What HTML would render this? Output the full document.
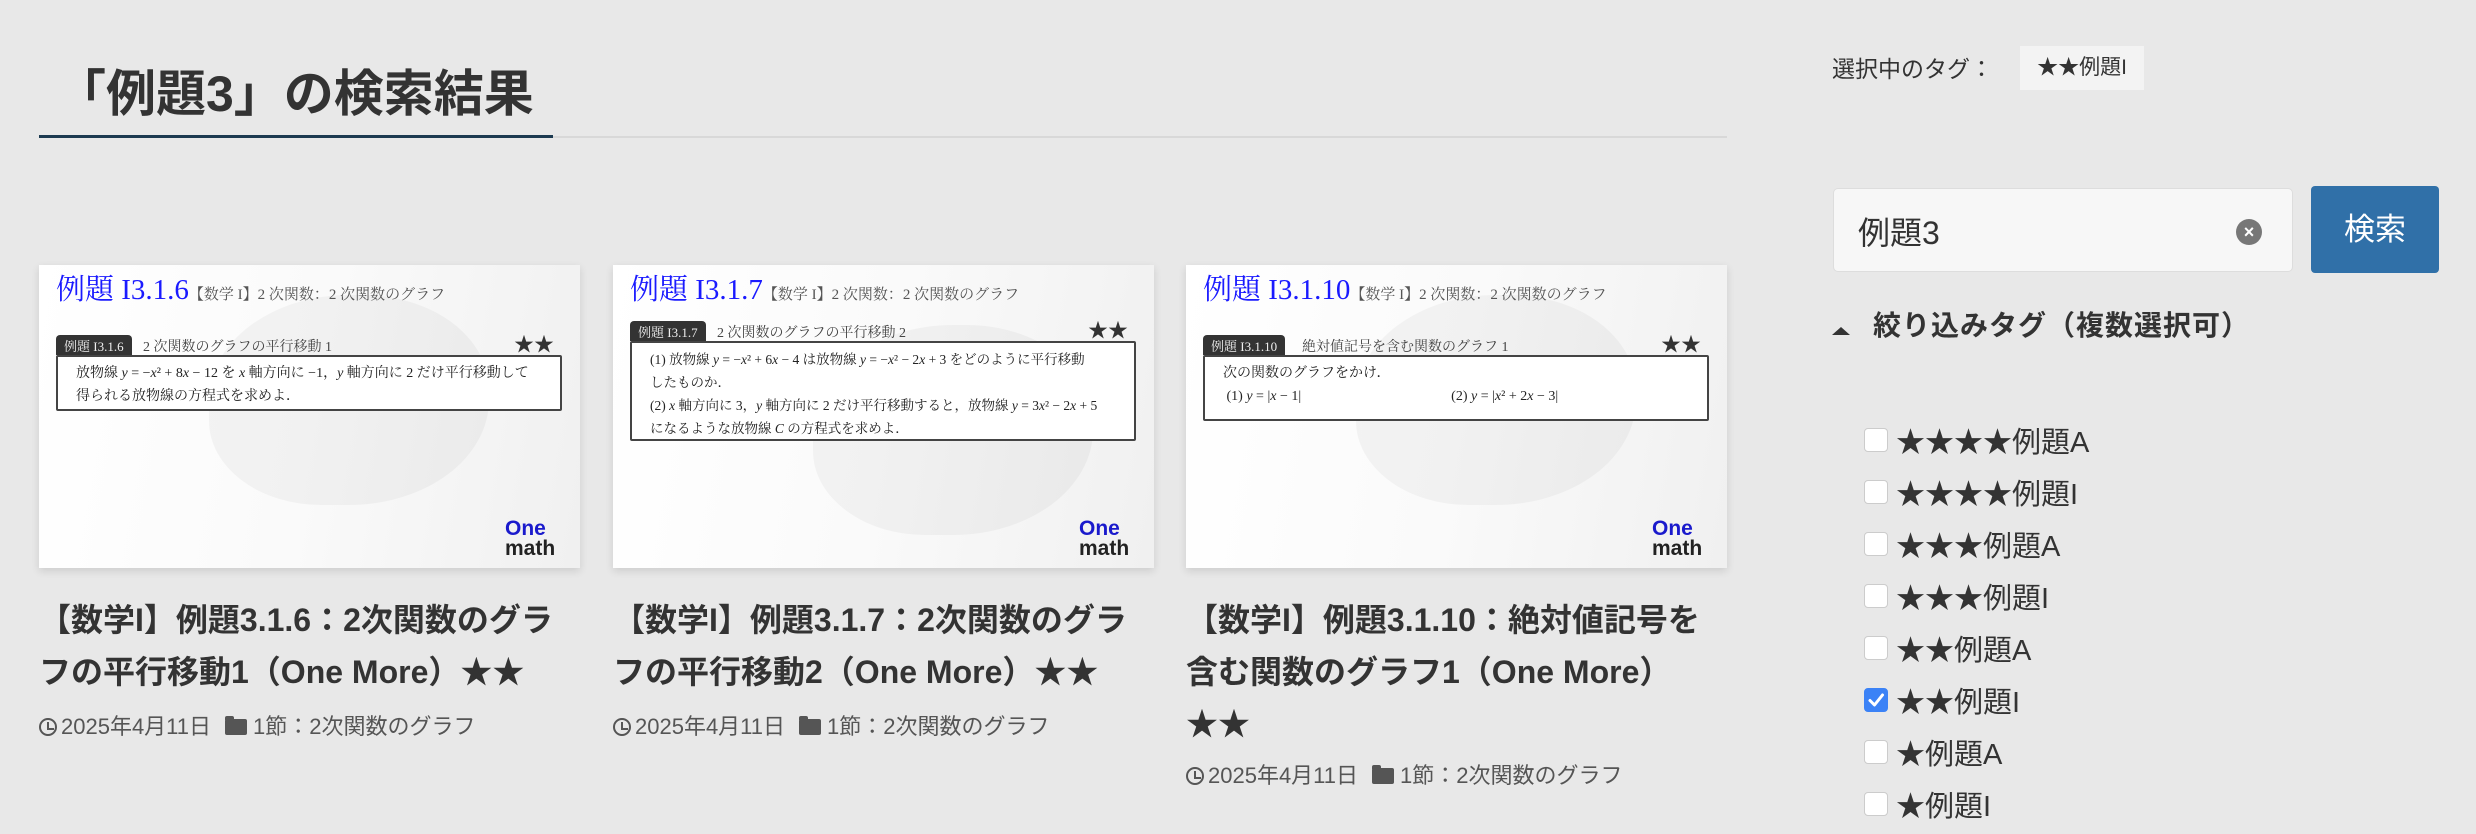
<!DOCTYPE html>
<html><head><meta charset="utf-8">
<style>
*{margin:0;padding:0;box-sizing:border-box}
body{width:2476px;height:834px;background:#e8e8e8;font-family:"Liberation Sans","Noto Sans CJK JP",sans-serif;color:#333;position:relative;overflow:hidden}
.abs{position:absolute}
h1{position:absolute;left:56px;top:54px;font-size:50px;font-weight:bold;color:#333}
.line{position:absolute;left:39px;top:136px;width:1688px;height:2px;background:#d8d8d8}
.line2{position:absolute;left:39px;top:135px;width:514px;height:3px;background:#1c3a50}
.card{position:absolute;top:265px;width:541px;height:303px;background:linear-gradient(100deg,#fff 0%,#fafafa 50%,#f0f0f0 100%);box-shadow:0 3px 8px rgba(0,0,0,.12);overflow:hidden;font-family:"Liberation Serif","Noto Serif CJK SC",serif}
.blob{position:absolute;left:170px;top:30px;width:280px;height:210px;border-radius:50% 45% 50% 40%;background:rgba(0,0,0,.035)}
.hd{position:absolute;left:17px;top:2px;color:#1a1aff;font-size:29px;white-space:nowrap}
.hd small{font-size:15px;color:#555}
.tab{position:absolute;left:17px;height:20px;background:#333;color:#eee;font-size:13px;padding:1px 8px;border-radius:4px 4px 0 0}
.tabt{position:absolute;font-size:14px;color:#444;white-space:nowrap}
.st{position:absolute;right:26px;font-size:20px;color:#333}
.box{position:absolute;left:17px;width:506px;border:2px solid #444;background:#fff;font-size:14px;color:#222;padding:5px 18px;line-height:23px;border-radius:2px}
.logo{position:absolute;left:466px;top:254px;font-family:"Liberation Sans",sans-serif;font-weight:bold;line-height:20px}
.logo .o{color:#1a1acc;font-size:21px;display:block}
.logo .m{color:#222;font-size:21px;display:block}
.ct{position:absolute;width:545px;font-size:32px;font-weight:bold;line-height:52px;color:#333}
.meta{position:absolute;font-size:22px;color:#555;white-space:nowrap}
.clk{display:inline-block;width:18px;height:18px;border:2px solid #555;border-radius:50%;vertical-align:-2px;position:relative;margin-right:4px}
.clk:after{content:"";position:absolute;left:6px;top:2px;width:5px;height:6px;border-left:2px solid #555;border-bottom:2px solid #555}
.fold{display:inline-block;width:22px;height:16px;background:#555;border-radius:2px;vertical-align:-1px;margin:0 6px 0 14px;position:relative}
.fold:before{content:"";position:absolute;left:0;top:-3px;width:9px;height:4px;background:#555;border-radius:2px 2px 0 0}
.cb{position:absolute;left:1864px;width:24px;height:24px;background:#fff;border:1px solid #ccc;border-radius:4px}
.cbt{position:absolute;left:1896px;font-size:29px;color:#333;white-space:nowrap}
</style></head><body>
<h1>「例題3」の検索結果</h1>
<div class="line"></div><div class="line2"></div>

<div class="card" style="left:39px">
<div class="blob"></div>
<div class="hd">例題 I3.1.6<small>【数学 I】2 次関数：2 次関数のグラフ</small></div>
<div class="tab" style="top:70px">例題 I3.1.6</div>
<div class="tabt" style="left:104px;top:71px">2 次関数のグラフの平行移動 1</div>
<div class="st" style="top:63px">★★</div>
<div class="box" style="top:90px;height:56px">放物線 <i>y</i> = −<i>x</i>² + 8<i>x</i> − 12 を <i>x</i> 軸方向に −1，<i>y</i> 軸方向に 2 だけ平行移動して<br>得られる放物線の方程式を求めよ．</div>
<div class="logo"><span class="o">One</span><span class="m">math</span></div>
</div>
<div class="ct" style="left:39px;top:594px">【数学I】例題3.1.6：2次関数のグラフの平行移動1（One More）★★</div>
<div class="meta" style="left:39px;top:709px"><span class="clk"></span>2025年4月11日<span class="fold"></span>1節：2次関数のグラフ</div>

<div class="card" style="left:613px">
<div class="blob" style="left:200px;top:60px"></div>
<div class="hd">例題 I3.1.7<small>【数学 I】2 次関数：2 次関数のグラフ</small></div>
<div class="tab" style="top:56px">例題 I3.1.7</div>
<div class="tabt" style="left:104px;top:57px">2 次関数のグラフの平行移動 2</div>
<div class="st" style="top:49px">★★</div>
<div class="box" style="top:76px;height:100px;font-size:13.5px">(1) 放物線 <i>y</i> = −<i>x</i>² + 6<i>x</i> − 4 は放物線 <i>y</i> = −<i>x</i>² − 2<i>x</i> + 3 をどのように平行移動<br>したものか．<br>(2) <i>x</i> 軸方向に 3，<i>y</i> 軸方向に 2 だけ平行移動すると，放物線 <i>y</i> = 3<i>x</i>² − 2<i>x</i> + 5<br>になるような放物線 <i>C</i> の方程式を求めよ．</div>
<div class="logo"><span class="o">One</span><span class="m">math</span></div>
</div>
<div class="ct" style="left:613px;top:594px">【数学I】例題3.1.7：2次関数のグラフの平行移動2（One More）★★</div>
<div class="meta" style="left:613px;top:709px"><span class="clk"></span>2025年4月11日<span class="fold"></span>1節：2次関数のグラフ</div>

<div class="card" style="left:1186px">
<div class="blob"></div>
<div class="hd">例題 I3.1.10<small>【数学 I】2 次関数：2 次関数のグラフ</small></div>
<div class="tab" style="top:70px">例題 I3.1.10</div>
<div class="tabt" style="left:116px;top:71px">絶対値記号を含む関数のグラフ 1</div>
<div class="st" style="top:63px">★★</div>
<div class="box" style="top:90px;height:66px">次の関数のグラフをかけ．<br>&nbsp;(1) <i>y</i> = |<i>x</i> − 1|<span style="display:inline-block;width:150px"></span>(2) <i>y</i> = |<i>x</i>² + 2<i>x</i> − 3|</div>
<div class="logo"><span class="o">One</span><span class="m">math</span></div>
</div>
<div class="ct" style="left:1186px;top:594px">【数学I】例題3.1.10：絶対値記号を含む関数のグラフ1（One More）<br>★★</div>
<div class="meta" style="left:1186px;top:758px"><span class="clk"></span>2025年4月11日<span class="fold"></span>1節：2次関数のグラフ</div>

<div class="abs" style="left:1832px;top:50px;font-size:23px;color:#333">選択中のタグ：</div>
<div class="abs" style="left:2020px;top:46px;width:124px;height:44px;background:#f3f3f3;font-size:21px;line-height:44px;text-align:center;color:#333">★★例題I</div>

<div class="abs" style="left:1833px;top:188px;width:460px;height:84px;background:#f7f7f7;border:1px solid #ddd;border-radius:5px"></div>
<div class="abs" style="left:1858px;top:208px;font-size:32px;color:#333">例題3</div>
<div class="abs" style="left:2236px;top:219px;width:26px;height:26px;border-radius:50%;background:#777;color:#fff;font-size:18px;line-height:26px;text-align:center;font-weight:bold">×</div>
<div class="abs" style="left:2311px;top:186px;width:128px;height:87px;background:#3070a8;border-radius:4px;color:#fff;font-size:31px;line-height:87px;text-align:center">検索</div>

<div class="abs" style="left:1832px;top:327px;width:0;height:0;border-left:9px solid transparent;border-right:9px solid transparent;border-bottom:8px solid #333"></div>
<div class="abs" style="left:1873px;top:304px;font-size:28px;font-weight:bold;color:#333;letter-spacing:1px">絞り込みタグ（複数選択可）</div>

<div class="cb" style="top:428px"></div><div class="cbt" style="top:419px">★★★★例題A</div>
<div class="cb" style="top:480px"></div><div class="cbt" style="top:471px">★★★★例題I</div>
<div class="cb" style="top:532px"></div><div class="cbt" style="top:523px">★★★例題A</div>
<div class="cb" style="top:584px"></div><div class="cbt" style="top:575px">★★★例題I</div>
<div class="cb" style="top:636px"></div><div class="cbt" style="top:627px">★★例題A</div>
<div class="cb" style="top:688px;background:#3b82f6;border-color:#3b82f6"><svg width="24" height="24" viewBox="0 0 24 24" style="position:absolute;left:-1px;top:-1px"><path d="M6 12.5 L10.5 17 L18.5 7" stroke="#fff" stroke-width="3" fill="none" stroke-linecap="round" stroke-linejoin="round"/></svg></div><div class="cbt" style="top:679px">★★例題I</div>
<div class="cb" style="top:740px"></div><div class="cbt" style="top:731px">★例題A</div>
<div class="cb" style="top:792px"></div><div class="cbt" style="top:783px">★例題I</div>
</body></html>
